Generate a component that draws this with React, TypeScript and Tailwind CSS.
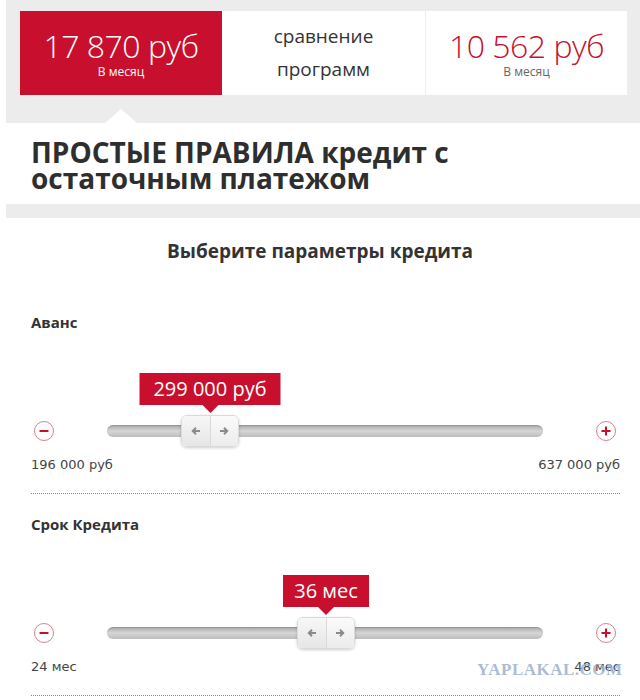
import React from "react";

type SliderProps = {
  label: string;
  value: string;
  min: string;
  max: string;
  knobLeft: number;
  tipWidth: number;
};

function RoundButton({ plus }: { plus?: boolean }) {
  return (
    <div className="flex h-[20px] w-[20px] shrink-0 items-center justify-center rounded-full border border-[#d2838f] bg-white">
      <svg width="12" height="12" viewBox="0 0 12 12">
        <path d="M1.5 6h9" stroke="#c8102e" strokeWidth="2" />
        {plus && <path d="M6 1.5v9" stroke="#c8102e" strokeWidth="2" />}
      </svg>
    </div>
  );
}

function Arrow({ dir }: { dir: "left" | "right" }) {
  return (
    <svg width="10" height="10" viewBox="0 0 10 10">
      {dir === "left" ? (
        <path d="M9 5H2M5 1.8L1.8 5 5 8.2" fill="none" stroke="#8a8a8a" strokeWidth="2" />
      ) : (
        <path d="M1 5h7M5 1.8L8.2 5 5 8.2" fill="none" stroke="#8a8a8a" strokeWidth="2" />
      )}
    </svg>
  );
}

function CreditSlider({ label, value, min, max, knobLeft, tipWidth }: SliderProps) {
  return (
    <div>
      <div className="text-[15px] leading-[20px] font-bold text-[#333]">{label}</div>
      <div className="mt-[89px] flex items-center">
        <div className="ml-[3px]">
          <RoundButton />
        </div>
        <div className="relative ml-[53px] h-[12px] w-[436px] rounded-full bg-gradient-to-b from-[#a9a9a9] via-[#d6d6d6] to-[#bdbdbd] shadow-[inset_0_1px_1px_rgba(0,0,0,0.15)]">
          {/* value bubble */}
          <div
            className="absolute bottom-[32px] flex h-[32px] -translate-x-1/2 items-center justify-center bg-[#c8102e] text-[20px] text-white"
            style={{ left: knobLeft + 29, width: tipWidth }}
          >
            {value}
            <div className="absolute top-full left-1/2 h-0 w-0 -translate-x-1/2 border-x-[8px] border-t-[8px] border-x-transparent border-t-[#c8102e]" />
          </div>
          {/* knob */}
          <div
            className="absolute top-[-10px] flex h-[32px] w-[58px] overflow-hidden rounded-[6px] border border-[#dadada] shadow-[0_1px_3px_rgba(0,0,0,0.2)]"
            style={{ left: knobLeft }}
          >
            <div className="flex flex-1 items-center justify-center bg-gradient-to-b from-[#f7f7f7] to-[#e6e6e6]">
              <Arrow dir="left" />
            </div>
            <div className="w-px bg-[#d9d9d9]" />
            <div className="flex flex-1 items-center justify-center bg-gradient-to-b from-[#fbfbfb] to-[#ececec]">
              <Arrow dir="right" />
            </div>
          </div>
        </div>
        <div className="ml-[53px]">
          <RoundButton plus />
        </div>
      </div>
      <div className="mt-[16px] flex justify-between font-['DejaVu_Sans',sans-serif] text-[13px] leading-[16px] text-[#444]">
        <span>{min}</span>
        <span>{max}</span>
      </div>
      <div className="mt-[20px] border-b border-dotted border-[#888]" />
    </div>
  );
}

export default function App() {
  return (
    <div className="relative w-[640px] bg-white font-['Open_Sans',sans-serif] text-[#333]">
      {/* program comparison bar */}
      <div className="relative ml-[6px] bg-[#ececec] pt-[11px] pr-[13px] pb-[28px] pl-[14px]">
        <div className="flex h-[84px]">
          <div className="flex w-[202px] flex-col items-center justify-center bg-[#c8102e] text-white">
            <div className="text-[32px] leading-[36px] font-light tracking-[-0.5px]">17 870 руб</div>
            <div className="mt-[1px] text-[12px] leading-[14px]">В месяц</div>
          </div>
          <div className="flex w-[203px] flex-col items-center justify-center bg-white text-[19px] leading-[33px] text-[#333]">
            <div>сравнение</div>
            <div>программ</div>
          </div>
          <div className="flex flex-1 flex-col items-center justify-center border-l border-[#eeeeee] bg-white">
            <div className="text-[32px] leading-[36px] font-light tracking-[-0.5px] text-[#c8102e]">10 562 руб</div>
            <div className="mt-[1px] text-[12px] leading-[14px] text-[#666]">В месяц</div>
          </div>
        </div>
        <div className="absolute bottom-0 left-[99px] h-0 w-0 border-x-[16px] border-b-[14px] border-x-transparent border-b-white" />
      </div>

      <div className="px-[31px] pt-[16px] pb-[13px] text-[28px] leading-[26px] font-bold text-[#2e2e2e]">
        <div>ПРОСТЫЕ ПРАВИЛА кредит с</div>
        <div>остаточным платежом</div>
      </div>
      <div className="ml-[6px] h-[14px] bg-[#ececec]" />

      <div className="mt-[21px] text-center text-[19px] leading-[24px] font-bold text-[#333]">
        Выберите параметры кредита
      </div>

      <div className="mt-[49px] flex flex-col gap-[20px] pr-[20px] pl-[31px]">
        <CreditSlider label="Аванс" value="299 000 руб" min="196 000 руб" max="637 000 руб" knobLeft={74} tipWidth={141} />
        <CreditSlider label="Срок Кредита" value="36 мес" min="24 мес" max="48 мес" knobLeft={190} tipWidth={86} />
      </div>

      <div className="absolute top-[660px] left-[477px] font-['Liberation_Serif',serif] text-[17px] leading-[20px] font-bold tracking-[0.5px] text-[#9fb3cf]/90">
        YAPLAKAL.COM
      </div>
    </div>
  );
}
